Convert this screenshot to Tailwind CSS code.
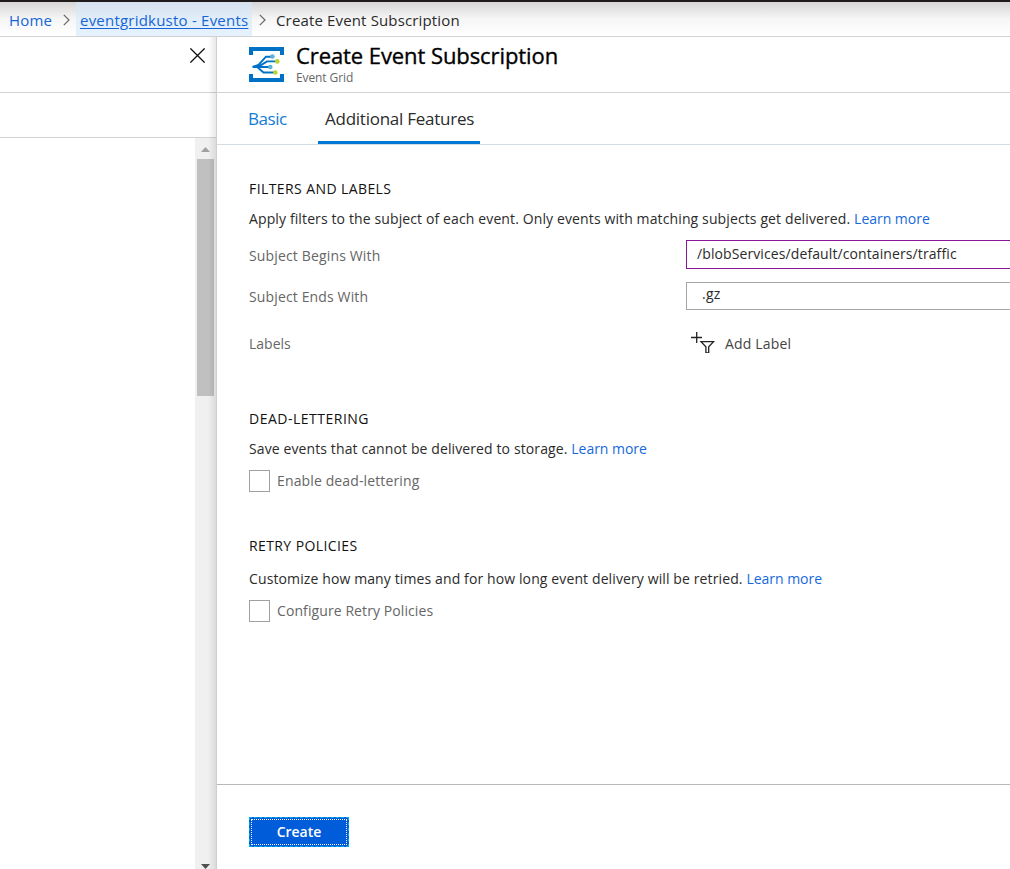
<!DOCTYPE html>
<html lang="en">
<head>
<meta charset="utf-8">
<title>Create Event Subscription</title>
<script src="https://cdn.jsdelivr.net/npm/@tailwindcss/browser@4"></script>
</head>
<body class="flex h-[869px] w-[1010px] flex-col overflow-hidden bg-white font-['Open_Sans','Noto_Sans',sans-serif] text-[14px] leading-5 whitespace-nowrap text-[#2b2b2b]">
<nav class="flex h-[37px] shrink-0 border-t-2 border-b border-t-[#1f1b1b] border-b-[#d2d2d2] bg-linear-to-b from-[#d6d6d6] via-[#f6f6f6] via-50% to-white text-[15px] leading-[37px]">
  <a class="flex w-[76px] items-start pl-[9px] text-[#1565d8]"><span class="w-[54px] tracking-[0.15px]">Home</span>
    <svg class="mt-3 h-3 w-[7px]" viewBox="0 0 7 12" fill="none" stroke="#666" stroke-width="1.2"><path d="M.8.8 6 6 .8 11.2"/></svg>
  </a>
  <a class="w-[176px] bg-[#d3eafc]/60 pl-1 tracking-[0.22px] text-[#1565d8] underline underline-offset-2">eventgridkusto - Events</a>
  <svg class="mt-3 ml-[7px] h-3 w-[7px]" viewBox="0 0 7 12" fill="none" stroke="#666" stroke-width="1.2"><path d="M.8.8 6 6 .8 11.2"/></svg>
  <span class="pl-[10px] tracking-[0.15px]">Create Event Subscription</span>
</nav>
<div class="flex min-h-0 flex-1">
  <aside class="relative flex w-[217px] shrink-0 flex-col border-r border-[#cfcfcf]">
    <div class="flex h-14 shrink-0 justify-end border-b border-[#d2d2d2] pt-[11px] pr-[11px]">
      <svg class="h-[15px] w-[15px]" viewBox="0 0 15 15" fill="none" stroke="#111" stroke-width="1.3"><path d="M.4.4 14.6 14.6M14.6.4.4 14.6"/></svg>
    </div>
    <div class="h-[45px] shrink-0 border-b border-[#d2d2d2]"></div>
    <div class="flex min-h-0 w-[21px] flex-1 flex-col items-center self-end bg-[#f0f0f0]">
      <svg class="mt-[9px] h-[5px] w-[9px] shrink-0" viewBox="0 0 9 5" fill="#a0a0a0"><path d="M0 5 4.5 0 9 5z"/></svg>
      <div class="mt-[7px] h-[237px] w-[17px] shrink-0 bg-[#c0c0c0]"></div>
      <svg class="mt-auto h-[5px] w-[9px] shrink-0" viewBox="0 0 9 5" fill="#505050"><path d="M0 0 4.5 5 9 0z"/></svg>
    </div>
    <div class="absolute inset-y-0 right-0 w-2 bg-linear-to-l from-black/9 to-transparent"></div>
  </aside>
  <main class="flex min-w-0 flex-1 flex-col">
    <header class="flex h-14 shrink-0 border-b border-[#d2d2d2] pl-8">
      <svg class="mt-[10px] h-[35px] w-[35px] shrink-0" viewBox="0 0 35 35" fill="none">
        <path fill="#0072c6" d="M0 0h35v8h-4V4H4v4H0zM0 27h4v4h27v-4h4v8H0z"/>
        <path stroke="#0072c6" stroke-width="1.9" d="M3.5 20 9.5 18 17 9.7h6M10 19.4 18 14.4h10M4 20h17M8.5 20.3 14.5 25.5H26"/>
        <path fill="#0072c6" d="M3.3 20 10 17v3.8z"/>
        <circle cx="23.4" cy="9.5" r="2.3" fill="#59b4d9"/><circle cx="21.3" cy="20" r="2.3" fill="#59b4d9"/>
        <circle cx="28.3" cy="14.4" r="2.3" fill="#b8d432"/><circle cx="26.3" cy="25.5" r="2.3" fill="#b8d432"/>
      </svg>
      <div class="pt-[6px] pl-3">
        <h1 class="text-[22px] leading-[25px] font-medium tracking-[-0.08px] text-black [-webkit-text-stroke:0.35px_black]">Create Event Subscription</h1>
        <p class="mt-[2px] text-[12px] leading-4 tracking-[-0.1px] text-[#666]">Event Grid</p>
      </div>
    </header>
    <div class="flex h-[52px] shrink-0 border-b border-[#d5dce3] pl-[25px] text-[17px] leading-[51px]">
      <a class="w-[76px] pl-[6px] tracking-[-0.45px] text-[#0f7cd6]">Basic</a>
      <a class="w-[162px] border-b-3 border-[#0078d4] pl-[7px] tracking-[-0.25px]">Additional Features</a>
    </div>
    <section class="h-[230px] shrink-0 pt-[34px] pl-8">
      <h2 class="mb-[10px] tracking-[0.41px] text-[#111]">FILTERS AND LABELS</h2>
      <p class="tracking-[0.12px]">Apply filters to the subject of each event. Only events with matching subjects get delivered. <a class="tracking-[-0.02px] text-[#1669dc]">Learn more</a></p>
      <div class="mt-[11px] flex h-[29px]">
        <label class="w-[437px] pt-[6px] tracking-[0.15px] text-[#666]">Subject Begins With</label>
        <div class="flex-1 border border-r-0 border-[#881798] pt-[3px] pl-[10px] tracking-[0.1px]">/blobServices/default/containers/traffic</div>
      </div>
      <div class="mt-[13px] flex h-7">
        <label class="w-[437px] pt-[5px] tracking-[0.14px] text-[#666]">Subject Ends With</label>
        <div class="flex-1 border border-r-0 border-[#a6a6a6] pt-[1px] pl-[15px] tracking-[0.2px]">.gz</div>
      </div>
      <div class="mt-[20px] flex h-7">
        <span class="w-[442px] pt-1 text-[#666]">Labels</span>
        <svg class="mt-[1px] h-[22px] w-6" viewBox="0 0 24 22" fill="none" stroke="#222" stroke-width="1.3"><path d="M0 6.5h11M5.7 1v11"/><path d="M10 10.6h12.6l-4.9 5.2v6h-2.8v-6z"/></svg>
        <span class="pt-1 pl-[10px] tracking-[0.18px] text-[#444]">Add Label</span>
      </div>
    </section>
    <section class="h-[127px] shrink-0 pt-[34px] pl-8">
      <h2 class="mb-[10px] tracking-[0.5px] text-[#111]">DEAD-LETTERING</h2>
      <p class="tracking-[0.11px]">Save events that cannot be delivered to storage. <a class="tracking-[-0.02px] text-[#1669dc]">Learn more</a></p>
      <label class="mt-[11px] flex gap-[7px] tracking-[0.13px] text-[#666]"><span class="h-[22px] w-[21px] border border-[#a0a0a0]"></span><span class="pt-px">Enable dead-lettering</span></label>
    </section>
    <section class="min-h-0 flex-1 pt-[34px] pl-8">
      <h2 class="mb-[13px] tracking-[0.4px] text-[#111]">RETRY POLICIES</h2>
      <p class="tracking-[0.115px]">Customize how many times and for how long event delivery will be retried. <a class="tracking-[-0.02px] text-[#1669dc]">Learn more</a></p>
      <label class="mt-[11px] flex gap-[7px] tracking-[0.09px] text-[#666]"><span class="h-[22px] w-[21px] border border-[#a0a0a0]"></span><span class="pt-px">Configure Retry Policies</span></label>
    </section>
    <footer class="h-[85px] shrink-0 border-t border-[#b8b8b8] pt-8 pl-8">
      <button class="block h-[30px] w-[100px] border border-dashed border-[#00b0f0] bg-[#015cda] p-px text-white"><span class="block h-[26px] border border-dotted border-white leading-6 font-semibold">Create</span></button>
    </footer>
  </main>
</div>
</body>
</html>
